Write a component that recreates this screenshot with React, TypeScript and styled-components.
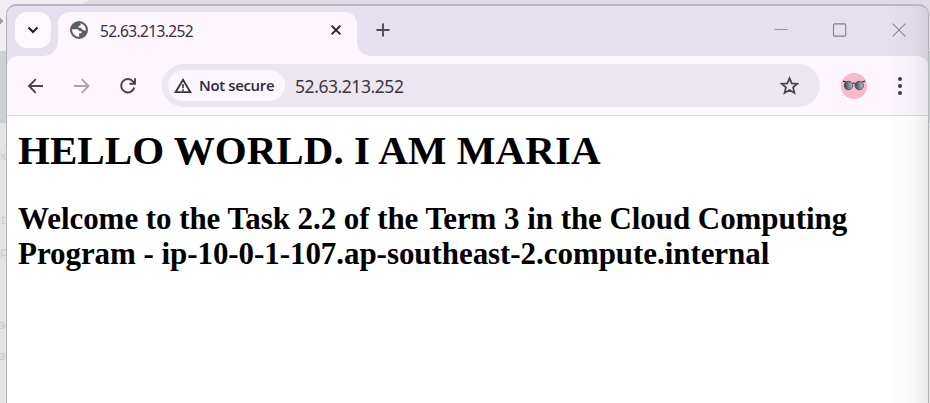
import React from 'react';
import styled, { createGlobalStyle } from 'styled-components';

const GlobalStyle = createGlobalStyle`
  * { box-sizing: border-box; }
  html, body { margin: 0; overflow: hidden; background: #e2e4e4; }
`;

const Desktop = styled.div`
  position: relative;
  width: 930px;
  height: 403px;
  padding: 4px 1px 0 6px;
  overflow: hidden;
  background: linear-gradient(#f3ecf3 0 51px, #ccd1d2 51px 123px, #e3e5e5 123px);
`;

const BackTabStrip = styled.div`
  position: absolute;
  left: 80px;
  right: 0;
  top: 0;
  height: 50px;
  border-radius: 12px 0 0 0;
  background: #dfdae4;
`;

const BackText = styled.span<{ $top: number; $left: number }>`
  position: absolute;
  top: ${(p) => p.$top}px;
  left: ${(p) => p.$left}px;
  font: 13px/16px 'Open Sans', sans-serif;
  letter-spacing: -0.8px;
  color: #c9cacd;
`;

const BackArrow = styled.svg`
  position: absolute;
  top: 17px;
  left: 0;
`;

const Window = styled.div`
  position: relative;
  display: flex;
  flex-direction: column;
  height: 410px;
  border: 1px solid #b5b0b9;
  border-width: 2px 1px 0 1px;
  border-top-color: #bcb5c1;
  border-radius: 10px 10px 0 0;
  overflow: hidden;
  background: #e6dfed;
  &::after {
    content: '';
    position: absolute;
    inset: 0 0 0 auto;
    width: 40px;
    background: linear-gradient(90deg, rgba(90, 90, 90, 0), rgba(90, 90, 90, 0.04) 60%, rgba(90, 90, 90, 0.12));
    pointer-events: none;
  }
`;

const TabStrip = styled.div`
  display: flex;
  align-items: flex-start;
  height: 50px;
  padding: 6px 16px 0 8px;
`;

const TabSearch = styled.button`
  display: grid;
  place-items: center;
  width: 36px;
  height: 36px;
  margin: 0 7px 0 0;
  padding: 0;
  border: 0;
  border-radius: 12px;
  background: #fdf7ff;
`;

const Tab = styled.div`
  position: relative;
  display: flex;
  align-items: center;
  width: 299px;
  height: 44px;
  padding: 0 14px 8px 12px;
  border-radius: 12px 12px 0 0;
  background: #fdf6ff;
  &::before,
  &::after {
    content: '';
    position: absolute;
    bottom: 0;
    width: 14px;
    height: 14px;
  }
  &::before {
    left: -14px;
    background: radial-gradient(circle at 0 0, transparent 13.5px, #fdf6ff 14px);
  }
  &::after {
    right: -14px;
    background: radial-gradient(circle at 100% 0, transparent 13.5px, #fdf6ff 14px);
  }
`;

const TabTitle = styled.span`
  flex: 1;
  margin: 2px 0 0 12px;
  font: 15.5px/20px 'Noto Sans', sans-serif;
  letter-spacing: -0.62px;
  color: #36323b;
`;

const NewTab = styled.div`
  display: grid;
  place-items: center;
  width: 36px;
  height: 36px;
  margin-left: 8px;
`;

const WindowControls = styled.div`
  display: flex;
  align-items: center;
  gap: 39px;
  height: 36px;
  margin-left: auto;
  margin-right: 3px;
`;

const Toolbar = styled.div`
  display: flex;
  align-items: center;
  flex: none;
  height: 60px;
  padding: 0 16px 0 19px;
  border-bottom: 1px solid #dfd9e3;
  border-radius: 11px 11px 0 0;
  background: #fdf6ff;
`;

const NavButtons = styled.div`
  display: flex;
  gap: 26px;
  width: 136px;
`;

const AddressBar = styled.div`
  display: flex;
  align-items: center;
  width: 658px;
  height: 43px;
  padding: 0 21px 0 6px;
  border-radius: 22px;
  background: #ece6f0;
`;

const SecurityChip = styled.div`
  display: flex;
  align-items: center;
  width: 117px;
  height: 31px;
  padding: 0 0 2px 6px;
  border-radius: 16px;
  background: #fdf6ff;
  font: 600 15px/20px 'Open Sans', sans-serif;
  letter-spacing: -0.36px;
  color: #2e2939;
  white-space: nowrap;
  svg { flex: none; margin: 2px 7px 0 0; }
`;

const Address = styled.span`
  flex: 1;
  margin: 0 0 0 10px;
  font: 17.5px/22px 'Noto Sans', sans-serif;
  letter-spacing: -0.44px;
  color: #3a3441;
`;

const Avatar = styled.div`
  display: grid;
  place-items: center;
  width: 26px;
  height: 26px;
  margin-left: 21px;
  border-radius: 50%;
  background: #f8b9cd;
`;

const MenuButton = styled.div`
  display: grid;
  place-items: center;
  width: 20px;
  margin-left: 23px;
`;

const Page = styled.main`
  flex: 1;
  padding: 11px 11px 0 11px;
  background: #fff;
  color: #000;
  font-family: 'Liberation Serif', serif;
`;

const Title = styled.h1`
  margin: 0;
  font-size: 41px;
  line-height: 46px;
  letter-spacing: 0.06px;
  white-space: nowrap;
`;

const Subtitle = styled.h2`
  margin: 28px 0 0;
  font-size: 31px;
  line-height: 35px;
  letter-spacing: -0.06px;
  white-space: nowrap;
`;

const Chevron = () => (
  <svg width="14" height="14" viewBox="0 0 14 14" fill="none" stroke="#211d26" strokeWidth="2.1">
    <path d="M2.5 4.5 7 9l4.5-4.5" />
  </svg>
);

const Globe = () => (
  <svg width="18" height="18" viewBox="0 0 18 18">
    <circle cx="9" cy="9" r="9" fill="#5c6065" />
    <path d="M2.1 8.2h4.7c2 0 2.1 2.1 3.6 2.1h1.2v1.9H9.1v3.7A7 7 0 0 1 2.1 8.2Z" fill="#fdf6ff" />
    <path d="M10.6 2.2v1.3c0 1.2-.9 1.5-2 1.5v1.8c1.8 0 3 .4 3.7 1.7.5.9 1.3 1 3.6 1A7 7 0 0 0 10.6 2.2Z" fill="#fdf6ff" />
  </svg>
);

const CloseTab = () => (
  <svg width="14" height="14" viewBox="0 0 14 14" stroke="#29252e" strokeWidth="2">
    <path d="m2.6 2.6 8.8 8.8m0-8.8-8.8 8.8" />
  </svg>
);

const Plus = () => (
  <svg width="16" height="16" viewBox="0 0 16 16" stroke="#504a56" strokeWidth="1.9">
    <path d="M8 1.5v13M1.5 8h13" />
  </svg>
);

const Arrow = ({ color, flip }: { color: string; flip?: boolean }) => (
  <svg width="20" height="20" viewBox="0 0 20 20" fill="none" stroke={color} strokeWidth="1.9">
    <path d={flip ? 'M2 10h14M9.7 3.2 16.5 10l-6.8 6.8' : 'M17 10H3M9.8 3.2 3 10l6.8 6.8'} />
  </svg>
);

const Reload = () => (
  <svg width="20" height="20" viewBox="0 0 20 20" fill="none" stroke="#484055" strokeWidth="1.9">
    <path d="M16.3 11.5A6.7 6.7 0 1 1 15 5.4l1.6 1.8" />
    <path d="M17 2.3v5.4h-5.5" />
  </svg>
);

const Warning = () => (
  <svg width="18" height="16" viewBox="0 0 18 16" fill="none" stroke="#37323d" strokeWidth="1.8">
    <path d="M9 1.8 1.6 14.2h14.8Z" />
    <path d="M9 6v4.2M9 11.2V13" strokeWidth="1.6" />
  </svg>
);

const Star = () => (
  <svg width="20" height="20" viewBox="0 0 20 20" fill="none" stroke="#4a444f" strokeWidth="1.8">
    <path d="m10.5 2.2 2.2 5.1 5.6.5-4.2 3.6 1.3 5.5-4.9-2.9-4.9 2.9 1.3-5.5-4.2-3.6 5.6-.5Z" />
  </svg>
);

const Glasses = () => (
  <svg width="22" height="11" viewBox="0 0 22 11">
    <defs>
      <linearGradient id="lens">
        <stop offset="0" stopColor="#353b3e" />
        <stop offset=".5" stopColor="#6b8a8f" />
        <stop offset="1" stopColor="#c3bcc3" />
      </linearGradient>
    </defs>
    <path d="m0 1 3 1M22 1l-3 1M9.4 3.5q1.5-1 2.8 0" fill="none" stroke="#292c2d" strokeWidth="1.2" />
    <circle cx="5.5" cy="5.5" r="4.2" fill="url(#lens)" stroke="#4e4b50" strokeWidth=".9" />
    <circle cx="16.2" cy="5.5" r="4.2" fill="url(#lens)" stroke="#4e4b50" strokeWidth=".9" />
  </svg>
);

const Dots = () => (
  <svg width="6" height="20" viewBox="0 0 6 20" fill="#403852">
    <circle cx="3" cy="3" r="2" />
    <circle cx="3" cy="10" r="2" />
    <circle cx="3" cy="17" r="2" />
  </svg>
);

const Minimize = () => (
  <svg width="20" height="14" viewBox="0 0 20 14" stroke="#96909c">
    <path d="M3.5 6.5h13" />
  </svg>
);

const Maximize = () => (
  <svg width="20" height="14" viewBox="0 0 20 14" fill="none" stroke="#85808a">
    <rect x="3.5" y=".9" width="12.2" height="12.2" rx="1" strokeWidth="1.1" />
  </svg>
);

const CloseWindow = () => (
  <svg width="20" height="14" viewBox="0 0 20 14" stroke="#8d8792" strokeWidth="1.1">
    <path d="m3.7.7 12.6 12.6m0-12.6L3.7 13.3" />
  </svg>
);

export default function App() {
  return (
    <>
      <GlobalStyle />
      <Desktop>
        <BackTabStrip />
        <BackArrow width="4" height="8" viewBox="0 0 4 8" fill="#a09aa3">
          <path d="M0 .5 3.5 4 0 7.5Z" />
        </BackArrow>
        <BackText $top={147} $left={0}>ic</BackText>
        <BackText $top={211} $left={1}>t</BackText>
        <BackText $top={243} $left={0}>p</BackText>
        <BackText $top={316} $left={-2}>ac</BackText>
        <BackText $top={347} $left={-2}>at</BackText>
        <Window>
          <TabStrip>
            <TabSearch aria-label="Search tabs"><Chevron /></TabSearch>
            <Tab>
              <Globe />
              <TabTitle>52.63.213.252</TabTitle>
              <CloseTab />
            </Tab>
            <NewTab><Plus /></NewTab>
            <WindowControls>
              <Minimize />
              <Maximize />
              <CloseWindow />
            </WindowControls>
          </TabStrip>
          <Toolbar>
            <NavButtons>
              <Arrow color="#484055" />
              <Arrow color="#aaa2b0" flip />
              <Reload />
            </NavButtons>
            <AddressBar>
              <SecurityChip><Warning />Not secure</SecurityChip>
              <Address>52.63.213.252</Address>
              <Star />
            </AddressBar>
            <Avatar><Glasses /></Avatar>
            <MenuButton><Dots /></MenuButton>
          </Toolbar>
          <Page>
            <Title>HELLO WORLD. I AM MARIA</Title>
            <Subtitle>
              Welcome to the Task 2.2 of the Term 3 in the Cloud Computing
              <br />
              Program - ip-10-0-1-107.ap-southeast-2.compute.internal
            </Subtitle>
          </Page>
        </Window>
      </Desktop>
    </>
  );
}
